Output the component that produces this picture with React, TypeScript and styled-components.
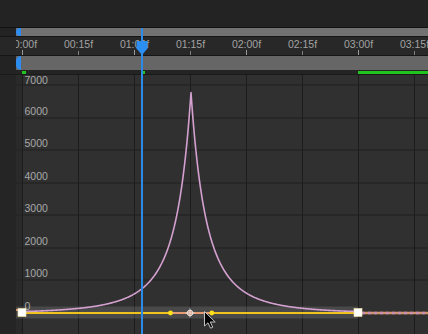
import React from "react";
import styled, { createGlobalStyle } from "styled-components";

const GlobalStyle = createGlobalStyle`
  html, body { margin: 0; padding: 0; background: #232323; }
  body { font-family: "Liberation Sans", Arial, sans-serif; }
`;

/* ---------- geometry helpers ---------- */
const ORIGIN_X = 22.5; // x of 00:00f
const PX_PER_15F = 56;
const frameToX = (f: number) => ORIGIN_X + (f * PX_PER_15F) / 15;

const ZERO_Y = 313;
const gridYs = [313, 280, 248, 215, 183, 150, 118, 85];
const valueLabels = ["0", "1000", "2000", "3000", "4000", "5000", "6000", "7000"];

const PEAK_X = 191;
const CURVE_BASE = 311.6;
const CURVE_H = 219;
const SHARP = 46;
const shape = (d: number) => 1 / Math.pow(1 + Math.abs(d) / SHARP, 3);

const buildCurve = () => {
  const x0 = frameToX(0);
  const x1 = frameToX(90);
  const feL = shape(x0 - PEAK_X);
  const feR = shape(x1 - PEAK_X);
  const pts: string[] = [];
  for (let x = x0; x <= x1 + 0.01; x += 0.5) {
    const d = x - PEAK_X;
    const fe = d < 0 ? feL : feR;
    const g = Math.max(0, (shape(d) - fe) / (1 - fe));
    pts.push(`${x.toFixed(2)},${(CURVE_BASE - CURVE_H * g).toFixed(2)}`);
  }
  return "M" + pts.join(" L");
};
const CURVE_D = buildCurve();

const rulerLabels = ["00:00f", "00:15f", "01:00f", "01:15f", "02:00f", "02:15f", "03:00f", "03:15f"];

/* ---------- styled parts ---------- */
const Frame = styled.div`
  position: relative;
  width: 428px;
  height: 334px;
  overflow: hidden;
  background: #232323;
  display: flex;
  flex-direction: column;
`;

const TopSpace = styled.div`
  flex: none;
  height: 27px;
  background: #232323;
`;

const Divider = styled.div<{ $color?: string }>`
  flex: none;
  height: 1px;
  background: ${(p) => p.$color ?? "#141414"};
`;

const TrackRow = styled.div<{ $h: number }>`
  flex: none;
  height: ${(p) => p.$h}px;
  display: grid;
  grid-template-columns: 16px 1fr;
`;

const Gutter = styled.div<{ $bg?: string }>`
  background: ${(p) => p.$bg ?? "#232323"};
`;

const BarTrack = styled.div<{ $bg: string }>`
  display: flex;
  background: ${(p) => p.$bg};
`;

const RangeHandle = styled.div<{ $radius: string }>`
  flex: none;
  width: 5px;
  background: #2d8cf0;
  border-radius: ${(p) => p.$radius};
`;

const Ruler = styled.div`
  background: #282828;
  overflow: hidden;
  display: flex;
`;

const RulerStrip = styled.div`
  display: flex;
  margin-left: -21.5px;
  height: 100%;
`;

const RulerCell = styled.div`
  flex: none;
  width: 56px;
  height: 100%;
  display: flex;
  flex-direction: column;
  align-items: center;
`;

const RulerLabel = styled.span`
  margin-top: 1px;
  font-size: 10.5px;
  line-height: 12px;
  color: #a2a2a2;
  white-space: nowrap;
`;

const RulerTick = styled.div<{ $major: boolean }>`
  margin-top: auto;
  width: 1px;
  height: ${(p) => (p.$major ? 5 : 4)}px;
  background: ${(p) => (p.$major ? "#9a9a9a" : "#808080")};
`;

const MarkerStrip = styled.div`
  position: relative;
  background: #242424;
`;

const Marker = styled.div`
  position: absolute;
  top: 1px;
  height: 3px;
  background: #1fc41f;
`;

const GraphRow = styled.div`
  flex: 1;
  display: grid;
  grid-template-columns: 16px 1fr;
  min-height: 0;
`;

const GraphSvg = styled.svg`
  display: block;
  width: 412px;
  height: 259px;
`;

const PlayheadLine = styled.div`
  position: absolute;
  left: 141px;
  top: 28px;
  bottom: 0;
  width: 2px;
  background: #2b8be8;
`;

const PlayheadHead = styled.svg`
  position: absolute;
  left: 135px;
  top: 40px;
  width: 14px;
  height: 16px;
`;

const Cursor = styled.svg`
  position: absolute;
  left: 203px;
  top: 310px;
  width: 15px;
  height: 20px;
`;

/* ---------- graph ---------- */
const Graph: React.FC = () => (
  <GraphSvg viewBox="16 75 412 259">
    <rect x={16} y={75} width={412} height={259} fill="#303030" />
    <rect x={16} y={75} width={6.5} height={259} fill="#2a2a2a" />
    {gridYs.map((y) => (
      <line key={`h${y}`} x1={16} x2={428} y1={y} y2={y} stroke="#272727" strokeWidth={2} />
    ))}
    {rulerLabels.map((_, i) => {
      const x = ORIGIN_X + i * PX_PER_15F;
      return <line key={`v${i}`} x1={x} x2={x} y1={75} y2={334} stroke="#1c1c1c" strokeWidth={1} />;
    })}
    {gridYs.map((y, i) => (
      <text
        key={`t${y}`}
        x={24.5}
        y={Math.max(y - 3.5, 83.5)}
        fontFamily="'Liberation Sans', Arial, sans-serif"
        fontSize={10.5}
        fill="#a8a8a8"
      >
        {valueLabels[i]}
      </text>
    ))}

    {/* selection band */}
    <rect x={16} y={306.5} width={342} height={12} fill="rgba(255,255,255,0.12)" />

    {/* extrapolation beyond keys */}
    <line x1={16} x2={19} y1={310} y2={310} stroke="#d8947a" strokeWidth={2} />
    <line x1={362} x2={428} y1={ZERO_Y} y2={ZERO_Y} stroke="#d4956a" strokeWidth={2.4} />
    <line x1={362} x2={428} y1={ZERO_Y} y2={ZERO_Y} stroke="#c88fb4" strokeWidth={2.4} strokeDasharray="3 3" />

    {/* value line */}
    <line x1={22} x2={358} y1={ZERO_Y} y2={ZERO_Y} stroke="#efc21c" strokeWidth={2} />
    <line x1={172} x2={210} y1={ZERO_Y} y2={ZERO_Y} stroke="#e69a72" strokeWidth={2} />

    {/* speed curve */}
    <path d={CURVE_D} fill="none" stroke="#d3a0cf" strokeWidth={1.6} strokeLinejoin="round" />

    {/* handles */}
    <circle cx={170.5} cy={ZERO_Y} r={2.4} fill="#ffe21a" />
    <circle cx={211.8} cy={ZERO_Y} r={2.4} fill="#ffe21a" />
    <circle cx={190} cy={ZERO_Y} r={2.8} fill="#d89070" stroke="#e4e4e4" strokeWidth={1} />
    <path d="M185.5 313 H194.5 M190 308.5 V317.5" stroke="#e4e4e4" strokeWidth={0.9} />

    {/* keyframes */}
    <rect x={18} y={308.5} width={8} height={8} fill="#ffffff" stroke="#f3e6a0" strokeWidth={0.6} />
    <rect x={354} y={308.5} width={8} height={8} fill="#ffffff" stroke="#f3e6a0" strokeWidth={0.6} />
  </GraphSvg>
);

/* ---------- app ---------- */
const App: React.FC = () => (
  <>
    <GlobalStyle />
    <Frame>
      <TopSpace />
      <Divider $color="#121212" />
      <TrackRow $h={8}>
        <Gutter />
        <BarTrack $bg="#727272">
          <RangeHandle $radius="4px 0 0 4px" />
        </BarTrack>
      </TrackRow>
      <Divider $color="#161616" />
      <TrackRow $h={18}>
        <Gutter $bg="#272727" />
        <Ruler>
          <RulerStrip>
            {rulerLabels.map((l, i) => (
              <RulerCell key={l}>
                <RulerLabel>{l}</RulerLabel>
                <RulerTick $major={i % 2 === 0} />
              </RulerCell>
            ))}
          </RulerStrip>
        </Ruler>
      </TrackRow>
      <Divider $color="#161616" />
      <TrackRow $h={14}>
        <Gutter />
        <BarTrack $bg="#666666">
          <RangeHandle $radius="5px 0 0 5px" />
        </BarTrack>
      </TrackRow>
      <TrackRow $h={4}>
        <Gutter />
        <MarkerStrip>
          <Marker style={{ left: frameToX(0) - 16.5, width: 4 }} />
          <Marker style={{ left: 143 - 16, width: 2 }} />
          <Marker style={{ left: frameToX(90) - 16.5, right: 0 }} />
        </MarkerStrip>
      </TrackRow>
      <Divider $color="#1a1a1a" />
      <GraphRow>
        <Gutter $bg="#252525" />
        <Graph />
      </GraphRow>

      <PlayheadLine />
      <PlayheadHead viewBox="0 0 14 16">
        <path d="M1.5 2.2 Q1.5 1 2.7 1 H11.3 Q12.5 1 12.5 2.2 V8.6 L7 15 L1.5 8.6 Z" fill="#2d8ef2" />
      </PlayheadHead>
      <Cursor viewBox="0 0 15 20">
        <path
          d="M1.5 1.5 L1.5 16 L5 12.8 L7.6 18.2 L9.8 17.2 L7.3 12 L12.2 12 Z"
          fill="#000"
          stroke="#c4c4c4"
          strokeWidth={1}
          strokeLinejoin="round"
        />
      </Cursor>
    </Frame>
  </>
);

export default App;
